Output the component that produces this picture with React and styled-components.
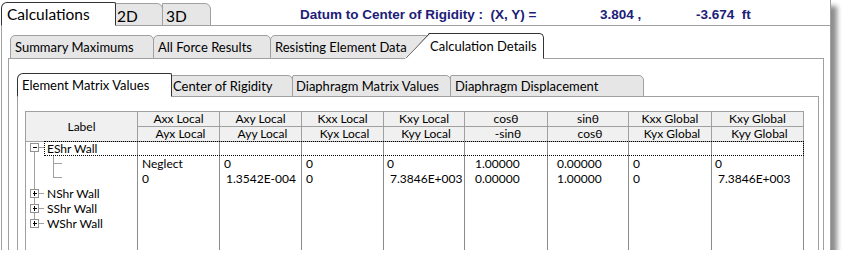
import React from "react";
import styled, { createGlobalStyle, css } from "styled-components";

const GlobalStyle = createGlobalStyle`
  html, body {
    margin: 0;
    padding: 0;
    background: #fff;
  }
  body {
    font-family: Lato, "Open Sans", sans-serif;
    color: #000;
  }
`;

const LINE = "#a0a0a0";
const DARK = "#333";

const Frame = styled.div`
  width: 831px;
  height: 250px;
  box-sizing: border-box;
  padding-left: 1px;
  border-right: 1px solid ${LINE};
  background: #fff;
  display: flex;
  flex-direction: column;
  overflow: hidden;
  box-shadow: 6px 6px 5px rgba(0, 0, 0, 0.45);
`;

const TabStrip = styled.div`
  display: flex;
  align-items: flex-end;
  height: ${(p) => p.$h}px;
  padding-left: ${(p) => p.$pad || 0}px;
  margin-bottom: -1px;
  position: relative;
  z-index: 1;
  box-sizing: border-box;
  flex-shrink: 0;
`;

const Tab = styled.div`
  box-sizing: border-box;
  flex-shrink: 0;
  width: ${(p) => p.$w}px;
  height: ${(p) => p.$h}px;
  margin-left: ${(p) => p.$ml ?? -1}px;
  padding: 0 0 ${(p) => p.$pb ?? 0}px ${(p) => p.$pl ?? 4}px;
  display: flex;
  align-items: ${(p) => (p.$pb != null ? "flex-end" : "center")};
  font-size: ${(p) => p.$fs || 13}px;
  line-height: 1;
  white-space: nowrap;
  overflow: hidden;
  background: ${(p) => (p.$active ? "#fff" : "#e6e6e6")};
  border: 1px solid ${(p) => (p.$active ? DARK : LINE)};
  border-bottom-color: ${(p) => (p.$active ? "#fff" : LINE)};
  border-radius: ${(p) => p.$r || "5px 5px 0 0"};
  position: relative;
  z-index: ${(p) => (p.$active ? 2 : 1)};
`;

const SlantTab = styled(Tab)`
  border-left: none;
  padding-left: 25px;
  clip-path: polygon(0 100%, 24px 0, 100% 0, 100% 100%);

  &::before {
    content: "";
    position: absolute;
    left: 1px;
    top: -1px;
    width: 24px;
    height: calc(100% + 1px);
    background: linear-gradient(
      to bottom right,
      transparent calc(50% - 0.8px),
      ${DARK} 50%,
      transparent calc(50% + 0.8px)
    );
  }
`;

const Title = styled.div`
  align-self: flex-start;
  display: flex;
  margin-left: 89px;
  padding-top: 7px;
  font-family: "Liberation Sans", Arial, sans-serif;
  font-weight: bold;
  font-size: 13.5px;
  line-height: 16px;
  color: #202078;
  white-space: pre;
`;

const TitlePart = styled.span`
  width: ${(p) => p.$w}px;
  flex-shrink: 0;
`;

const Panel = styled.div`
  flex: 1;
  min-height: 0;
  box-sizing: border-box;
  display: flex;
  flex-direction: column;
  border: 1px solid ${LINE};
  border-bottom: none;
  ${(p) => p.$noRight && "border-right: none;"}
  padding: ${(p) => p.$pad};
`;

const cols = css`
  display: grid;
  grid-template-columns: 112px 82px 82px 82px 81px 83px 81px 83px 92px;
`;

const Table = styled.div`
  border-left: 1px solid ${LINE};
  border-top: 1px solid ${LINE};
  height: 180px;
  display: flex;
  flex-direction: column;
  font-size: 12px;
  flex-shrink: 0;
`;

const Head = styled.div`
  ${cols};
  grid-template-rows: 15px 15px;
  background: #f0f0f0;
`;

const HeadCell = styled.div`
  box-sizing: border-box;
  grid-row: span ${(p) => p.$span || 1};
  border-right: 1px solid ${LINE};
  border-bottom: 1px solid ${LINE};
  display: flex;
  align-items: center;
  justify-content: center;
  padding-left: ${(p) => p.$shift || 0}px;
  white-space: nowrap;
  line-height: 1;
`;

const Row = styled.div`
  ${cols};
  height: ${(p) => p.$h || 15}px;
  position: relative;

  ${(p) =>
    p.$focus &&
    css`
      &::after {
        content: "";
        position: absolute;
        left: 18px;
        right: 0;
        top: -1px;
        bottom: 0;
        border: 1px dotted #000;
        pointer-events: none;
      }
    `}
`;

const Filler = styled(Row)`
  flex: 1;
  height: auto;
`;

const Cell = styled.div`
  box-sizing: border-box;
  border-right: 1px solid #8c8c8c;
  display: flex;
  align-items: center;
  padding-left: ${(p) => p.$pl ?? 4}px;
  white-space: nowrap;
  line-height: 1;
`;

const LabelCell = styled(Cell)`
  padding-left: 0;
`;

const NodeText = styled.span`
  padding-left: 1px;
`;

const TreeGlyph = ({ kind, h }) => {
  if (kind === "mid" || kind === "end") {
    const by = kind === "mid" ? 7.5 : 6.5;
    return (
      <svg width="40" height={h} style={{ display: "block", flexShrink: 0 }}>
        <g stroke={LINE} strokeWidth="1" shapeRendering="crispEdges">
          <line x1="8.5" y1="0" x2="8.5" y2={h} />
          <line x1="27.5" y1="0" x2="27.5" y2={kind === "mid" ? h : by + 0.5} />
          <line x1="27.5" y1={by} x2="36" y2={by} />
        </g>
      </svg>
    );
  }
  const cy = kind === "open" ? 5.5 : 7.5;
  const top = kind === "open" ? cy + 4.5 : 0;
  const bottom = kind === "last" ? cy - 4.5 : h;
  return (
    <svg width="20" height={h} style={{ display: "block", flexShrink: 0 }}>
      <g stroke={LINE} strokeWidth="1" shapeRendering="crispEdges">
        <line x1="8.5" y1={top} x2="8.5" y2={bottom} />
        <line x1="13" y1={cy} x2="18" y2={cy} />
      </g>
      <rect x="4.5" y={cy - 4} width="8" height="8" fill="#fff" stroke="#919191" />
      <g stroke="#000" shapeRendering="crispEdges">
        <line x1="6.5" y1={cy} x2="11" y2={cy} />
        {kind !== "open" && <line x1="8.5" y1={cy - 2.5} x2="8.5" y2={cy + 2.5} />}
      </g>
    </svg>
  );
};

const headTop = ["Axx Local", "Axy Local", "Kxx Local", "Kxy Local", "cosθ", "sinθ", "Kxx Global", "Kxy Global"];
const headBottom = ["Ayx Local", "Ayy Local", "Kyx Local", "Kyy Local", "-sinθ", "cosθ", "Kyx Global", "Kyy Global"];

// [text, left padding]
const rows = [
  { kind: "open", label: "EShr Wall", h: 14, focus: true, cells: [] },
  {
    kind: "mid",
    cells: [["Neglect", 4], ["0", 4], ["0", 4], ["0", 3], ["1.00000", 10], ["0.00000", 9], ["0", 4], ["0", 3]],
  },
  {
    kind: "end",
    cells: [["0", 4], ["1.3542E-004", 6], ["0", 4], ["7.3846E+003", 6], ["0.00000", 10], ["1.00000", 9], ["0", 4], ["7.3846E+003", 6]],
  },
  { kind: "closed", label: "NShr Wall", cells: [] },
  { kind: "closed", label: "SShr Wall", cells: [] },
  { kind: "last", label: "WShr Wall", cells: [] },
];

const MatrixTable = () => (
  <Table>
    <Head>
      <HeadCell $span={2}>Label</HeadCell>
      {headTop.map((t) => (
        <HeadCell key={t}>{t}</HeadCell>
      ))}
      {headBottom.map((t) => (
        <HeadCell key={"b" + t} $shift={4}>
          {t}
        </HeadCell>
      ))}
    </Head>
    {rows.map((r, i) => (
      <Row key={i} $h={r.h} $focus={r.focus}>
        <LabelCell>
          <TreeGlyph kind={r.kind} h={r.h || 15} />
          {r.label && <NodeText>{r.label}</NodeText>}
        </LabelCell>
        {Array.from({ length: 8 }).map((_, c) => {
          const v = r.cells[c];
          return (
            <Cell key={c} $pl={v ? v[1] : 4}>
              {v ? v[0] : ""}
            </Cell>
          );
        })}
      </Row>
    ))}
    <Filler>
      {Array.from({ length: 9 }).map((_, c) => (
        <Cell key={c} />
      ))}
    </Filler>
  </Table>
);

export default function App() {
  return (
    <>
      <GlobalStyle />
      <Frame>
        <TabStrip $h={26}>
          <Tab $active $w={115} $h={24} $ml={0} $fs={15.5} $pl={5} $pb={3} $r="6px 2px 0 0">
            Calculations
          </Tab>
          <Tab $w={48} $h={23} $fs={15.5} $pl={1} $pb={1} $r="0 6px 0 0">
            2D
          </Tab>
          <Tab $w={49} $h={23} $fs={15.5} $pl={3} $pb={1} $r="0 6px 0 0">
            3D
          </Tab>
          <Title>
            <TitlePart $w={300}>Datum to Center of Rigidity :  (X, Y) =</TitlePart>
            <TitlePart $w={96}>3.804 ,</TitlePart>
            <TitlePart $w={80}>-3.674  ft</TitlePart>
          </Title>
        </TabStrip>
        <Panel $noRight $pad="0 6px 0 6px">
          <TabStrip $h={33} $pad={2}>
            <Tab $w={144} $h={24} $ml={0}>
              Summary Maximums
            </Tab>
            <Tab $w={118} $h={24}>
              All Force Results
            </Tab>
            <Tab $w={162} $h={24}>
              Resisting Element Data
            </Tab>
            <SlantTab $active $w={139} $h={26} $ml={-27} $r="0 5px 0 0">
              Calculation Details
            </SlantTab>
          </TabStrip>
          <Panel $pad="0 4px 0 8px">
            <TabStrip $h={38}>
              <Tab $active $w={155} $h={24} $ml={0} $r="6px 2px 0 0">
                Element Matrix Values
              </Tab>
              <Tab $w={122} $h={22} $pl={1} $r="2px 5px 0 0">
                Center of Rigidity
              </Tab>
              <Tab $w={159} $h={22} $pl={3} $r="2px 5px 0 0">
                Diaphragm Matrix Values
              </Tab>
              <Tab $w={194} $h={22} $pl={4} $r="2px 5px 0 0">
                Diaphragm Displacement
              </Tab>
            </TabStrip>
            <Panel $pad="14px 14px 0 7px">
              <MatrixTable />
            </Panel>
          </Panel>
        </Panel>
      </Frame>
    </>
  );
}
